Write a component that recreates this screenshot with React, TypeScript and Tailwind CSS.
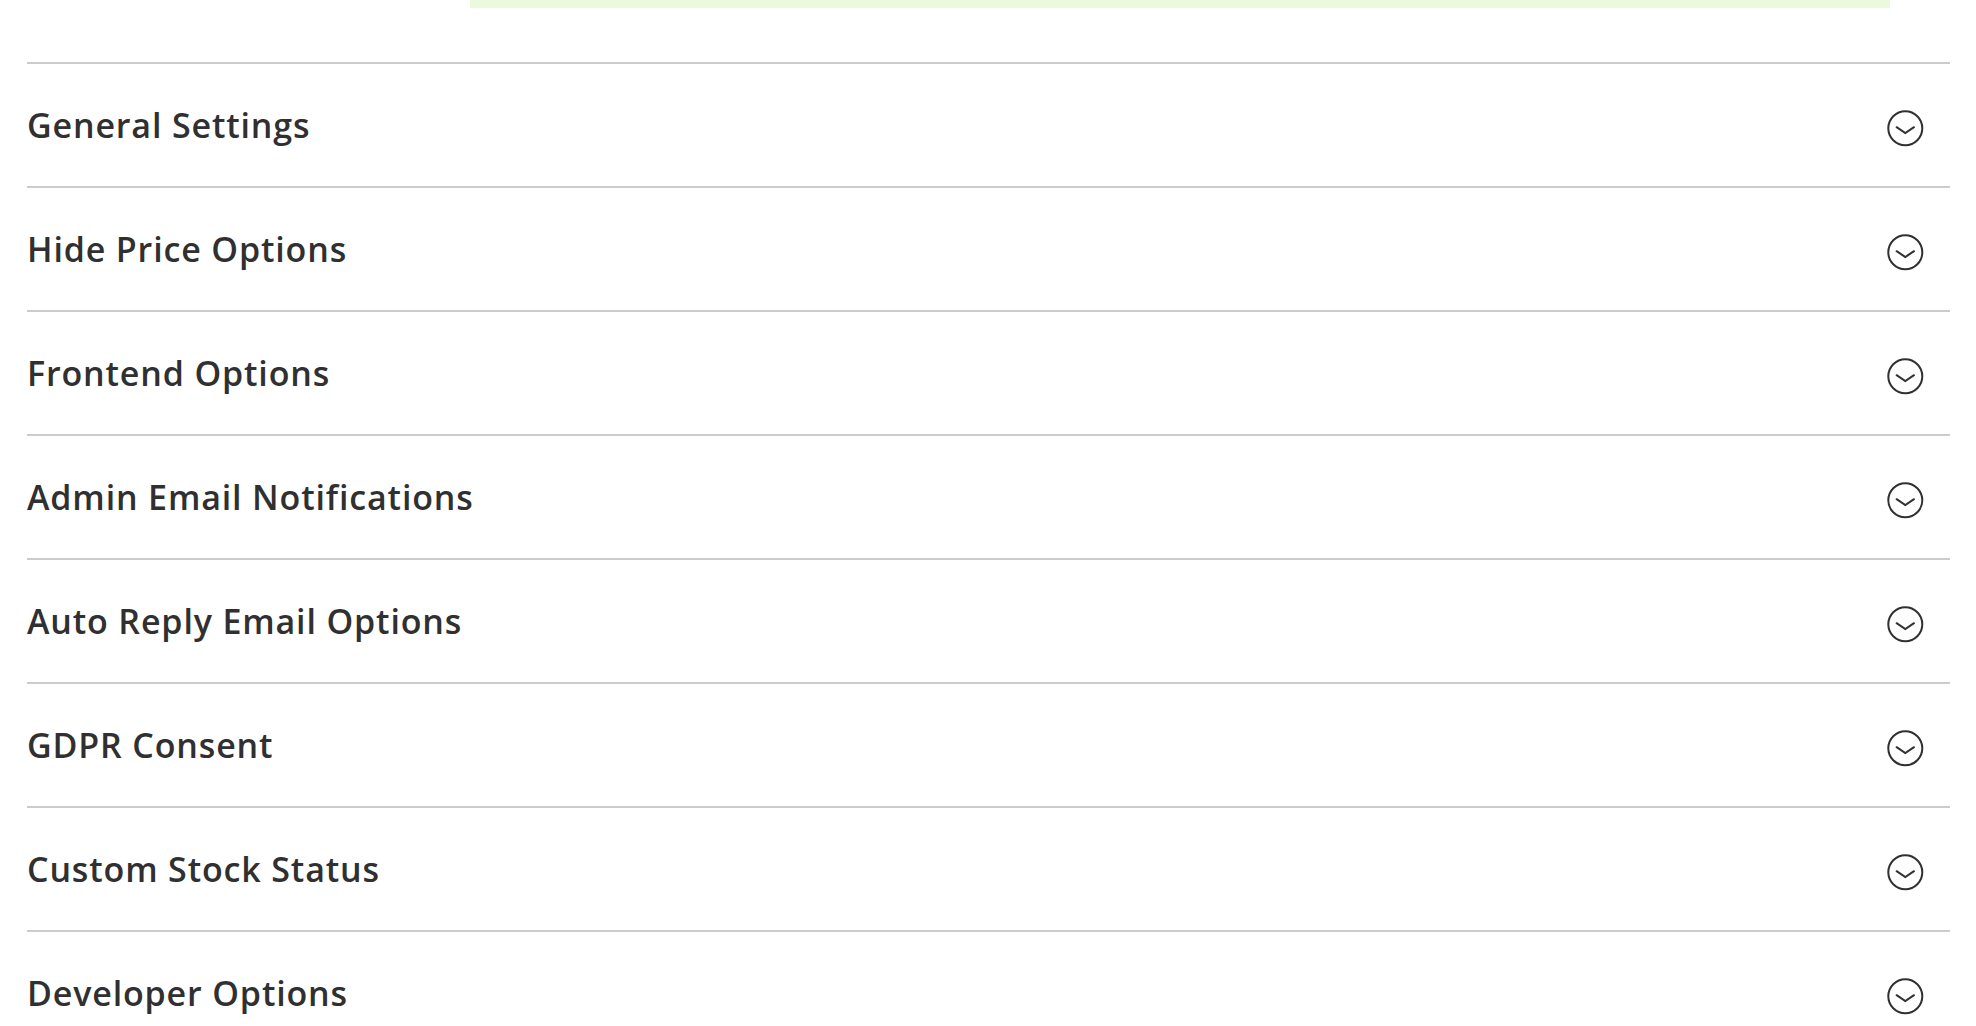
import { useState } from 'react'

const sections = [
  'General Settings',
  'Hide Price Options',
  'Frontend Options',
  'Admin Email Notifications',
  'Auto Reply Email Options',
  'GDPR Consent',
  'Custom Stock Status',
  'Developer Options',
]

function ToggleIcon({ open }: { open: boolean }) {
  return (
    <svg
      viewBox="0 0 38 38"
      fill="none"
      stroke="currentColor"
      strokeWidth={2}
      aria-hidden="true"
      className={`mt-1.5 size-[38px] shrink-0 ${open ? 'rotate-180' : ''}`}
    >
      <circle cx="19.3" cy="19.3" r="17" />
      <path d="M10.6 18.2 L19.3 24 L28 18.2" strokeLinecap="round" strokeLinejoin="miter" />
    </svg>
  )
}

export default function App() {
  const [active, setActive] = useState<string | null>(null)

  return (
    <main className="min-h-screen bg-white pl-[27px] pr-[26px] font-['Open_Sans',sans-serif] text-[#303030]">
      {/* Bottom edge of the notice above the sections */}
      <div className="mb-[54px] ml-[443px] mr-[60px] h-2 bg-[#ebf9dd]" />
      {sections.map(title => (
        <section key={title} className="border-t-2 border-[#cccccc]">
          <h2>
            <button
              type="button"
              aria-expanded={active === title}
              onClick={() => setActive(active === title ? null : title)}
              className="flex h-[122px] w-full items-center justify-between pr-[26px] text-left text-[34px] font-semibold tracking-wide"
            >
              {title}
              <ToggleIcon open={active === title} />
            </button>
          </h2>
        </section>
      ))}
    </main>
  )
}
